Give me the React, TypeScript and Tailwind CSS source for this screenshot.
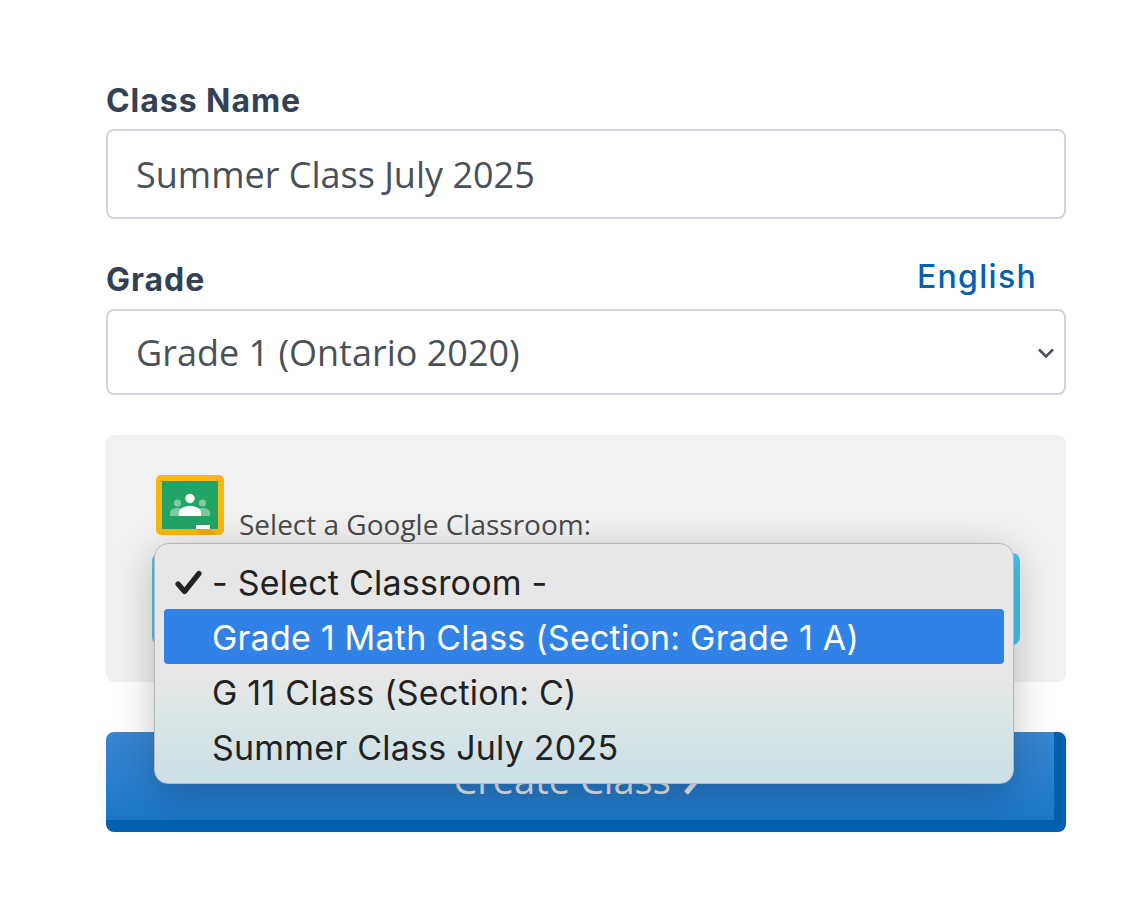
const labelFont = "font-['Inter','Noto_Sans',sans-serif]";

function ClassroomLogo() {
  return (
    <svg width="68" height="60" viewBox="0 0 68 60" className="block shrink-0">
      <rect width="68" height="60" rx="5" fill="#f8b90c" />
      <rect x="6" y="6" width="56" height="48" fill="#21a465" />
      <path d="M40 54 H54 L60 60 H46 Z" fill="#eaa90c" />
      <rect x="40" y="50" width="14" height="4" fill="#ffffff" />
      <circle cx="21.500" cy="28" r="3.600" fill="#7fcaa3" />
      <circle cx="46.500" cy="28" r="3.600" fill="#7fcaa3" />
      <path d="M14 41 V38 C14 34.500 18 33 21.500 33 C25 33 28 34.500 28 38 V41 Z" fill="#7fcaa3" />
      <path d="M40 41 V38 C40 34.500 43 33 46.500 33 C50 33 54 34.500 54 38 V41 Z" fill="#7fcaa3" />
      <circle cx="34" cy="23.500" r="4.700" fill="#ffffff" />
      <path d="M23 41 V37.500 C23 33 29 31 34 31 C39 31 45 33 45 37.500 V41 Z" fill="#ffffff" />
    </svg>
  );
}

function MenuRow({ text, active, checked }: { text: string; active?: boolean; checked?: boolean }) {
  return (
    <div
      className={
        "relative flex h-[55px] items-center rounded-[4px] pl-[48px] pt-[1px] text-[34px] tracking-[0.22px] " +
        (active ? "bg-[#3182e6] text-white" : "text-[#222222]")
      }
    >
      {checked && (
        <svg width="30" height="26" viewBox="0 0 30 26" className="absolute left-[10px] top-[16px]">
          <path d="M4 14 L10.500 21.500 L25 3.500" fill="none" stroke="#222222" strokeWidth="5.200" strokeLinecap="round" strokeLinejoin="round" />
        </svg>
      )}
      {text}
    </div>
  );
}

export default function App() {
  return (
    <div className="min-h-screen w-full bg-white pl-[106px] pr-[80px] pt-[80px] font-['Open_Sans',sans-serif]">
      <label className={`block h-[49px] pt-[2px] text-[32px] font-bold leading-[38px] tracking-[0.95px] text-[#334155] ${labelFont}`}>
        Class Name
      </label>
      <div className="flex h-[90px] items-center rounded-[8px] border-2 border-[#cdd3df] pl-[28px] pt-[2px] text-[36px] text-[#4a5058]">
        Summer Class July 2025
      </div>

      <div className="mt-[46px] flex h-[44px] items-start justify-between">
        <label className={`mt-[-4px] text-[32px] font-bold leading-[38px] tracking-[0.95px] text-[#334155] ${labelFont}`}>
          Grade
        </label>
        <a className={`mt-[-6px] pr-[29px] text-[32px] font-medium leading-[36px] tracking-[1.3px] text-[#0061b0] ${labelFont}`}>
          English
        </a>
      </div>
      <div className="flex h-[86px] items-center justify-between rounded-[8px] border-2 border-[#cdd3df] pl-[28px] pr-[9px] pt-[2px] text-[36px] text-[#4a5058]">
        <span>Grade 1 (Ontario 2020)</span>
        <svg width="18" height="12" viewBox="0 0 18 12">
          <path d="M2 2.500 L9 9.500 L16 2.500" fill="none" stroke="#4a5058" strokeWidth="2.500" />
        </svg>
      </div>

      <div className="relative mt-[40px] h-[247px] rounded-[8px] bg-[#f1f1f1] pl-[46px] pr-[46px] pt-[40px]">
        <div className="flex h-[60px] items-end pl-[4px]">
          <ClassroomLogo />
          <span className="ml-[15px] translate-y-[6px] text-[28px] leading-[34px] text-[#4a4a4a]">Select a Google Classroom:</span>
        </div>
        <div className="mt-[18px] h-[92px] rounded-[8px] bg-[#42c6f4]"></div>

        {/* native select popup, sits over the panel and the button */}
        <div className="absolute left-[48px] top-[108px] z-10 h-[241px] w-[860px] rounded-[14px] border border-[#b8b8b8] bg-[linear-gradient(to_bottom,#e7e7e7_0%,#e7e7e7_57%,#dae6e6_73%,#cbdfe6_100%)] px-[9px] pt-[10px] shadow-[0_10px_40px_rgba(0,0,0,0.24)] font-['Inter',sans-serif]">
          <MenuRow text="- Select Classroom -" checked />
          <MenuRow text="Grade 1 Math Class (Section: Grade 1 A)" active />
          <MenuRow text="G 11 Class (Section: C)" />
          <MenuRow text="Summer Class July 2025" />
        </div>
      </div>

      <button className="mt-[50px] flex h-[100px] w-full items-center justify-center gap-[10px] rounded-[8px] border-b-[12px] border-r-[12px] border-[#0061b0] bg-[linear-gradient(to_bottom,#3a87d1,#1c76c8)] pr-[4px] pt-[6px] text-[38px] text-[#e2e8ef]">
        <span>Create Class</span>
        <svg width="22" height="34" viewBox="0 0 22 34">
          <path d="M5 3 L17 17 L5 31" fill="none" stroke="#e2e8ef" strokeWidth="5" />
        </svg>
      </button>
    </div>
  );
}
